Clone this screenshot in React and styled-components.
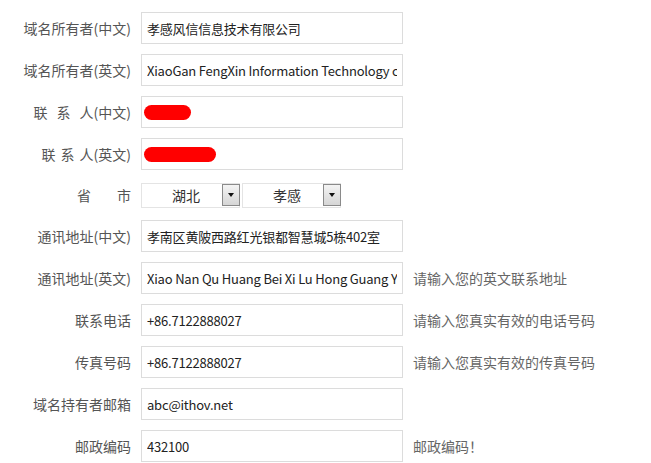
import React from "react";
import styled, { createGlobalStyle, css } from "styled-components";

const Global = createGlobalStyle`
  html, body { margin: 0; padding: 0; background: #fff; }
  body { font-family: "Noto Sans CJK SC", "Noto Sans", sans-serif; }
`;

const Form = styled.div`
  width: 651px;
  padding-top: 12px;
  display: grid;
  grid-template-columns: 131px 262px auto;
  column-gap: 10px;
  row-gap: 10px;
  align-items: center;
`;

const Label = styled.div`
  height: ${(p) => (p.$short ? 30 : 32)}px;
  display: flex;
  align-items: center;
  justify-content: flex-end;
  font-size: 14px;
  color: #555;
  white-space: nowrap;
  line-height: 1;
`;

const Gap = styled.span`
  display: inline-block;
  width: ${(p) => p.$w}px;
`;

const fieldCss = css`
  box-sizing: border-box;
  width: 262px;
  height: 32px;
  margin: 0;
  border: 1px solid #dcdcdc;
  border-radius: 0;
  padding: 0 5px;
  font-family: "Noto Sans CJK SC", "Noto Sans", sans-serif;
  font-size: 13px;
  letter-spacing: -0.2px;
  color: #222;
  background: #fff;
  outline: none;
`;

const Field = styled.input`
  ${fieldCss}
`;

const FieldBox = styled.div`
  ${fieldCss}
  display: flex;
  align-items: center;
`;

const Redact = styled.span`
  display: inline-block;
  width: ${(p) => p.$w}px;
  height: 15px;
  border-radius: 8px;
  background: #ff0000;
  margin-left: -3px;
`;

const Hint = styled.div`
  font-size: 14px;
  color: #666;
  white-space: nowrap;
`;

const SelectRow = styled.div`
  height: 30px;
  display: flex;
  align-items: center;
  gap: 2px;
`;

const Select = styled.div`
  box-sizing: border-box;
  width: 99px;
  height: 25px;
  border: 1px solid #e4e4e4;
  display: flex;
  align-items: center;
  font-size: 14px;
  color: #333;
`;

const SelectText = styled.span`
  flex: 1;
  text-align: center;
  padding-left: 8px;
`;

const DropBtn = styled.span`
  box-sizing: border-box;
  width: 18px;
  height: 22px;
  margin-right: -1px;
  border: 1px solid #8a8a8a;
  background: linear-gradient(#f4f4f4, #d6d6d6);
  display: flex;
  align-items: center;
  justify-content: center;
  &::after {
    content: "";
    border-left: 3.5px solid transparent;
    border-right: 3.5px solid transparent;
    border-top: 4px solid #111;
  }
`;

const rows = [
  { label: "域名所有者(中文)", value: "孝感风信信息技术有限公司" },
  { label: "域名所有者(英文)", value: "XiaoGan FengXin Information Technology co.,Ltd" },
  {
    label: (<>联<Gap $w={9} />系<Gap $w={9} />人(中文)</>),
    redact: 47,
  },
  {
    label: (<>联<Gap $w={5} />系<Gap $w={5} />人(英文)</>),
    redact: 72,
  },
  { select: true },
  { label: "通讯地址(中文)", value: "孝南区黄陂西路红光银都智慧城5栋402室" },
  {
    label: "通讯地址(英文)",
    value: "Xiao Nan Qu Huang Bei Xi Lu Hong Guang Yin Du Zhi Hui Cheng",
    hint: "请输入您的英文联系地址",
  },
  { label: "联系电话", value: "+86.7122888027", hint: "请输入您真实有效的电话号码" },
  { label: "传真号码", value: "+86.7122888027", hint: "请输入您真实有效的传真号码" },
  { label: "域名持有者邮箱", value: "abc@ithov.net" },
  { label: "邮政编码", value: "432100", hint: "邮政编码！" },
];

export default function App() {
  return (
    <>
      <Global />
      <Form>
        {rows.map((r, i) =>
          r.select ? (
            <React.Fragment key={i}>
              <Label $short>省<Gap $w={26} />市</Label>
              <SelectRow>
                <Select>
                  <SelectText>湖北</SelectText>
                  <DropBtn />
                </Select>
                <Select>
                  <SelectText>孝感</SelectText>
                  <DropBtn />
                </Select>
              </SelectRow>
              <div />
            </React.Fragment>
          ) : (
            <React.Fragment key={i}>
              <Label>{r.label}</Label>
              {r.redact ? (
                <FieldBox>
                  <Redact $w={r.redact} />
                </FieldBox>
              ) : (
                <Field readOnly value={r.value} />
              )}
              <Hint>{r.hint || ""}</Hint>
            </React.Fragment>
          )
        )}
      </Form>
    </>
  );
}
